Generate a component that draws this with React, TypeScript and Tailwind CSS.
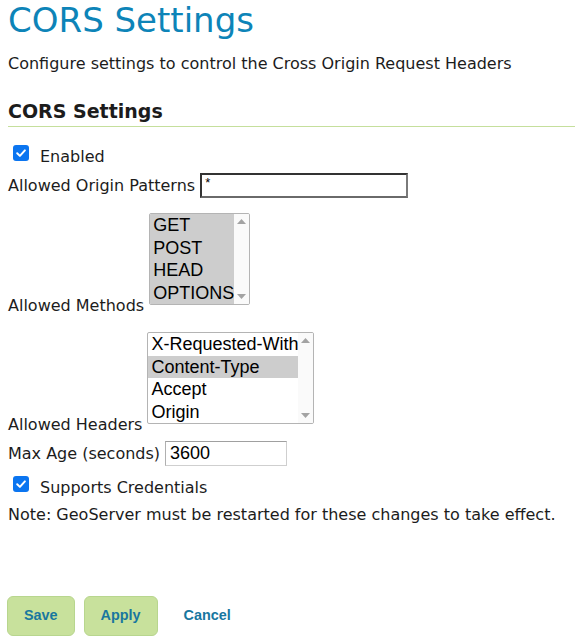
import React from 'react'

const sans = { fontFamily: '"DejaVu Sans", Verdana, sans-serif' }
const arial = { fontFamily: '"Liberation Sans", Arial, sans-serif' }

function Checkbox() {
  return (
    <div className="ml-[5px] w-4 h-4 rounded-[3px] bg-[#0b75f0] flex items-center justify-center shrink-0">
      <svg width="12" height="12" viewBox="0 0 12 12" fill="none">
        <path d="M2.2 6.3 L4.9 8.9 L9.9 3.4" stroke="white" strokeWidth="2" strokeLinecap="round" strokeLinejoin="round" />
      </svg>
    </div>
  )
}

function ListBox({ items, selected, width }: { items: string[]; selected: string[]; width: string }) {
  return (
    <div className={`${width} h-[92px] mb-[11px] border border-[#b4b4b4] rounded-[2px] flex bg-white overflow-hidden`} style={arial}>
      <div className="flex-1 min-w-0 flex flex-col">
        {items.map((it) => (
          <div
            key={it}
            className={`h-[22.5px] leading-[22.5px] text-[18px] pl-[3px] whitespace-nowrap overflow-hidden text-black ${selected.includes(it) ? 'bg-[#cdcdcd]' : ''}`}
          >
            {it}
          </div>
        ))}
      </div>
      <div className="w-[15px] shrink-0 bg-[#fafafa] flex flex-col justify-between items-center py-[5px]">
        <svg width="9" height="5" viewBox="0 0 9 5"><path d="M0 5 L4.5 0 L9 5 Z" fill="#a3a3a3" /></svg>
        <svg width="9" height="5" viewBox="0 0 9 5"><path d="M0 0 L4.5 5 L9 0 Z" fill="#a3a3a3" /></svg>
      </div>
    </div>
  )
}

export default function App() {
  return (
    <div className="w-[575px] h-[642px] bg-white pl-[8px] text-[#1c1c1c] overflow-hidden" style={sans}>
      <h1 className="text-[34px] leading-[40px] text-[#0d84b8] font-normal">CORS Settings</h1>
      <p className="mt-[14px] text-[16px] leading-[20px]">Configure settings to control the Cross Origin Request Headers</p>

      <h2 className="mt-[25px] text-[19px] leading-[24px] font-bold pb-[3px] border-b border-[#c5df9c] text-[#1c1c1c]">CORS Settings</h2>

      <div className="mt-[18px] flex items-start gap-[11px]">
        <Checkbox />
        <span className="mt-[2px] text-[16px] leading-[20px]">Enabled</span>
      </div>

      <div className="mt-[6px] flex items-center gap-[5px]">
        <span className="text-[16px] leading-[20px]">Allowed Origin Patterns</span>
        <div className="w-[208px] h-[25px] border-2 border-t-[#333] border-l-[#333] border-r-[#7a7a7a] border-b-[#6a6a6a] pl-[3px] text-[13px] leading-[15px] text-black" style={arial}>*</div>
      </div>

      <div className="mt-[15px] flex items-end gap-[5px]">
        <span className="text-[16px] leading-[20px]">Allowed Methods</span>
        <ListBox items={['GET', 'POST', 'HEAD', 'OPTIONS']} selected={['GET', 'POST', 'HEAD', 'OPTIONS']} width="w-[101px]" />
      </div>

      <div className="mt-[16px] flex items-end gap-[5px]">
        <span className="text-[16px] leading-[20px]">Allowed Headers</span>
        <ListBox items={['X-Requested-With', 'Content-Type', 'Accept', 'Origin']} selected={['Content-Type']} width="w-[167px]" />
      </div>

      <div className="mt-[6px] flex items-center gap-[5px]">
        <span className="text-[16px] leading-[20px]">Max Age (seconds)</span>
        <div className="w-[122px] h-[25px] border border-t-[#a0a0a0] border-l-[#b0b0b0] border-r-[#cfcfcf] border-b-[#cfcfcf] pl-[4px] text-[18px] leading-[23px] text-black" style={arial}>3600</div>
      </div>

      <div className="mt-[10px] flex items-start gap-[11px]">
        <Checkbox />
        <span className="mt-[2px] text-[16px] leading-[20px]">Supports Credentials</span>
      </div>

      <p className="mt-[7px] text-[16px] leading-[20px]">Note: GeoServer must be restarted for these changes to take effect.</p>

      <div className="mt-[71px] -ml-[1px] flex items-center" style={arial}>
        <button className="h-[40px] px-[16px] rounded-[6px] bg-[#c8e19c] border border-[#b8d68e] text-[#18779f] font-bold text-[14.4px]">Save</button>
        <button className="ml-[9px] h-[40px] px-[16px] rounded-[6px] bg-[#c8e19c] border border-[#b8d68e] text-[#18779f] font-bold text-[14.4px]">Apply</button>
        <a className="ml-[26px] text-[#18779f] font-bold text-[14.4px]">Cancel</a>
      </div>
    </div>
  )
}
